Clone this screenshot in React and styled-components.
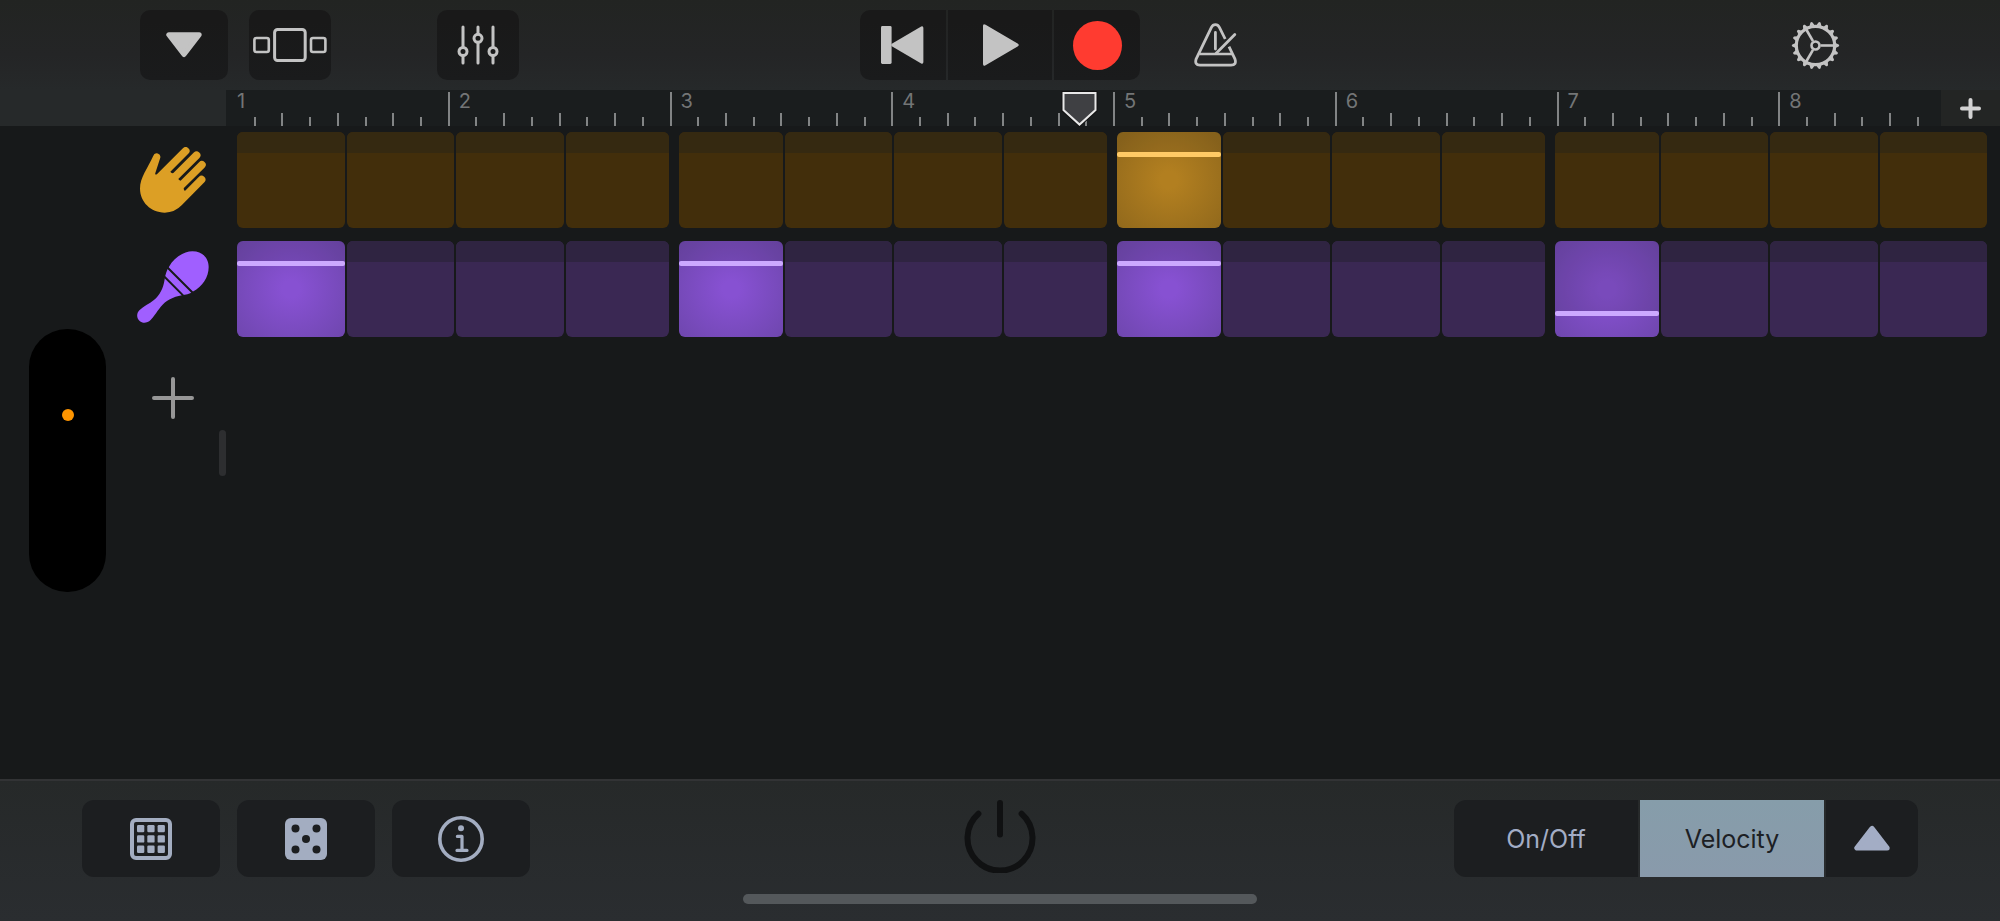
import React, { useState } from "react";
import styled, { createGlobalStyle, css } from "styled-components";

const SURFACE = "#17191a";

const GlobalStyle = createGlobalStyle`
  *, *::before, *::after { box-sizing: border-box; }
  html, body { margin: 0; background: ${SURFACE}; }
  body { font-family: Inter, "Liberation Sans", sans-serif; }
  button { font: inherit; border: 0; margin: 0; padding: 0; background: none; cursor: pointer; }
  svg { display: block; flex: none; }
`;

const Page = styled.div`
  position: relative;
  min-height: 100vh;
  display: flex;
  flex-direction: column;
  background: ${SURFACE};
`;

/* ---------- top toolbar ---------- */

const Toolbar = styled.header`
  display: grid;
  grid-template-columns: 1fr auto 1fr;
  align-items: center;
  padding: 10px 0;
  background: linear-gradient(#222422, #242526 60%, #26292a);
  color: #c3c3c3;
`;

const ToolbarStart = styled.div`
  display: flex;
  gap: 21px;
  padding-left: 140px;
`;

const ToolbarEnd = styled.div`
  display: flex;
  align-items: center;
  justify-content: space-between;
  padding: 0 160px 0 54px;
`;

const ToolButton = styled.button`
  display: flex;
  align-items: center;
  justify-content: center;
  width: ${(p) => (p.$wide ? 88 : 82)}px;
  height: 70px;
  margin-left: ${(p) => (p.$apart ? 85 : 0)}px;
  border-radius: 10px;
  background: linear-gradient(#191919 15%, #1a1b1c);
  color: inherit;
`;

const IconButton = styled.button`
  display: flex;
  color: inherit;
`;

const Transport = styled.div`
  display: flex;
  gap: 2px;
  border-radius: 10px;
  overflow: hidden;
`;

const TransportButton = styled.button`
  display: flex;
  align-items: center;
  justify-content: center;
  width: ${(p) => (p.$main ? 104 : 86)}px;
  height: 70px;
  background: linear-gradient(#191919 15%, #1a1b1c);
  color: inherit;
`;

const RecordDot = styled.span`
  width: 49px;
  height: 49px;
  border-radius: 50%;
  background: #ff3b30;
`;

/* ---------- ruler ---------- */

const RulerRow = styled.div`
  display: grid;
  grid-template-columns: 226px 1fr;
  height: 36px;
  background: #26292a;
`;

const Ruler = styled.div`
  position: relative;
  display: grid;
  grid-template-columns: repeat(8, 1fr);
  background: #1a1d1e;
`;

const Bar = styled.div`
  display: grid;
  color: #737576;
`;

const BarNumber = styled.span`
  grid-area: 1 / 1;
  padding-left: 11px;
  font-size: 20px;
  line-height: 23px;
`;

const Ticks = styled.div`
  grid-area: 1 / 1;
  display: grid;
  grid-template-columns: repeat(8, 1fr);
  align-items: end;
`;

const Tick = styled.span`
  width: 2px;
  height: ${(p) => p.$height}px;
  background: #828485;
`;

const Playhead = styled.svg`
  position: absolute;
  top: 1px;
  left: 48.1%;
  margin-left: -18px;
`;

const AddBars = styled.button`
  position: absolute;
  top: 0;
  right: 0;
  bottom: 0;
  width: 59px;
  display: flex;
  align-items: center;
  justify-content: center;
  background: #232524;
  color: #d2d2d2;
`;

/* ---------- sequencer ---------- */

const Sequencer = styled.main`
  flex: 1;
  display: grid;
  grid-template-columns: 226px 1fr;
`;

const Sidebar = styled.aside`
  display: flex;
  align-items: center;
`;

const TrackList = styled.div`
  align-self: stretch;
  flex: 1;
  display: flex;
  flex-direction: column;
  gap: 13px;
  padding: 6px 0 0 126px;
`;

const TrackButton = styled.button`
  display: flex;
  align-items: center;
  justify-content: center;
  height: 96px;
  color: #979797;
`;

const DragHandle = styled.span`
  width: 7px;
  height: 46px;
  border-radius: 4px;
  background: #2d2e30;
`;

const Lanes = styled.div`
  display: flex;
  flex-direction: column;
  gap: 13px;
  padding: 6px 13px 0 11px;
`;

const Lane = styled.div`
  display: grid;
  grid-template-columns: repeat(16, 1fr);
  gap: 2px;
`;

const tones = {
  gold: { off: "#422e0b", offTop: "#352911", mid: "#b27f20", edge: "#936a1c", line: "#ffca66" },
  violet: { off: "#3a2853", offTop: "#2f2441", mid: "#8751d2", edge: "#7047b0", line: "#cca9ff" },
};

const Step = styled.button`
  display: flex;
  flex-direction: column;
  height: 96px;
  border-radius: 6px;
  overflow: hidden;
  ${(p) => p.$beatEnd && "margin-right: 4px;"}
  ${(p) => p.$beatStart && "margin-left: 4px;"}
  ${(p) =>
    p.$on
      ? css`background: radial-gradient(circle at 50% 50%, ${tones[p.$tone].mid} 12%, ${tones[p.$tone].edge} 95%);`
      : css`background: ${tones[p.$tone].off};`}
`;

const StepTop = styled.span`
  width: 100%;
  height: ${(p) => (p.$low ? 71 : 21)}px;
  background: ${(p) => (p.$on ? "rgba(24, 25, 27, 0.12)" : tones[p.$tone].offTop)};
`;

const StepLevel = styled.span`
  width: 100%;
  height: 5px;
  margin-top: -1px;
  border-radius: 2px;
  background: ${(p) => tones[p.$tone].line};
`;

/* ---------- camera cut-out ---------- */

const CameraIsland = styled.div`
  position: absolute;
  top: 50%;
  left: 29px;
  width: 77px;
  height: 263px;
  margin-top: -132px;
  padding-top: 80px;
  border-radius: 38px;
  background: #000;
`;

const MicDot = styled.span`
  display: block;
  width: 12px;
  height: 12px;
  margin: 0 auto;
  border-radius: 50%;
  background: #ff9500;
`;

/* ---------- bottom bar ---------- */

const BottomBar = styled.footer`
  display: flex;
  flex-direction: column;
  gap: 17px;
  padding: 19px 0 17px;
  border-top: 2px solid #323335;
  background: linear-gradient(#262929, #2a2d30);
`;

const Controls = styled.div`
  display: grid;
  grid-template-columns: 1fr auto 1fr;
  align-items: center;
`;

const ControlsStart = styled.div`
  display: flex;
  gap: 17px;
  padding-left: 82px;
`;

const ControlsEnd = styled.div`
  display: flex;
  justify-content: flex-end;
  padding-right: 82px;
`;

const PadButton = styled.button`
  display: flex;
  align-items: center;
  justify-content: center;
  width: 138px;
  height: 77px;
  border-radius: 12px;
  background: #1c1e20;
  color: #a3adc1;
`;

const PowerButton = styled.button`
  display: flex;
  padding-bottom: 4px;
  color: #101112;
`;

const Segmented = styled.div`
  display: flex;
  gap: 2px;
  border-radius: 12px;
  overflow: hidden;
`;

const Segment = styled.button`
  display: flex;
  align-items: center;
  justify-content: center;
  width: ${(p) => (p.$narrow ? 92 : 184)}px;
  height: 77px;
  font-size: 25px;
  line-height: 30px;
  background: ${(p) => (p.$active ? "linear-gradient(#869daa, #899aab)" : "#1c1e20")};
  color: ${(p) => (p.$active ? "#1c2024" : "#a3adc5")};
`;

const HomeIndicator = styled.div`
  align-self: center;
  width: 514px;
  height: 10px;
  border-radius: 5px;
  background: #54585b;
`;

/* ---------- icons ---------- */

const DownIcon = () => (
  <svg width="36" height="26" viewBox="0 0 36 26" fill="currentColor" stroke="currentColor" strokeWidth="5" strokeLinejoin="round">
    <path d="M2.8 2.8H33.2L18 22.6Z" />
  </svg>
);

const BrowserIcon = () => (
  <svg width="74" height="36" viewBox="0 0 74 36" fill="none" stroke="currentColor">
    <rect x="21.6" y="2.5" width="30.6" height="31" rx="3" strokeWidth="3" />
    <rect x="1.4" y="11" width="14.4" height="14" rx="2" strokeWidth="2.6" />
    <rect x="58" y="11" width="14.4" height="14" rx="2" strokeWidth="2.6" />
  </svg>
);

const MixerIcon = () => (
  <svg width="42" height="40" viewBox="0 0 42 40" fill="none" stroke="currentColor" strokeWidth="3" strokeLinecap="round">
    <path d="M6 2V22M6 31V38M21 2V9M21 18V38M36 2V22M36 31V38" />
    <circle cx="6" cy="26.5" r="4" />
    <circle cx="21" cy="13.3" r="4" />
    <circle cx="36" cy="26.5" r="4" />
  </svg>
);

const RewindIcon = () => (
  <svg width="45" height="38" viewBox="0 0 45 38" fill="currentColor">
    <rect x="0" y="0" width="10.6" height="38" rx="1.4" />
    <path d="M10.8 20.2Q9.6 19 10.8 17.8L40.2 .4Q42.4-.4 42.4 2V36Q42.4 38.4 40.2 37.6Z" />
  </svg>
);

const PlayIcon = () => (
  <svg width="38" height="42" viewBox="-2 0 38 42" fill="currentColor">
    <path d="M0 2Q0-.8 2.6 .8L34.6 19.4Q37 21 34.6 22.6L2.6 41.2Q0 42.8 0 40Z" />
  </svg>
);

const MetronomeIcon = () => (
  <svg width="44" height="44" viewBox="0 0 44 44" fill="none" stroke="currentColor" strokeWidth="2.8">
    <path
      d="M31.2 16 25.4 4.3Q24 1.7 21.4 1.7 18.8 1.7 17.4 4.3L2.2 35.8Q.2 42 6 42.2H37Q42.8 42 41 36.2L35 23.6"
      strokeLinejoin="round"
    />
    <path d="M5.5 31H38" strokeWidth="2.4" />
    <path d="M21.4 9.5V26" strokeLinecap="round" />
    <path d="M22 30.5 40.8 11.4" strokeLinecap="round" />
  </svg>
);

const TEETH = Array.from({ length: 18 }, (_, i) => i * 20);

const GearIcon = () => (
  <svg width="49" height="49" viewBox="-24.5 -24.5 49 49" fill="none" stroke="currentColor">
    <circle r="19.2" strokeWidth="3.2" />
    <circle r="4" strokeWidth="2.6" />
    {[0, 120, 240].map((a) => (
      <path key={a} d="M5 0H18.5" strokeWidth="2.6" transform={`rotate(${a})`} />
    ))}
    {TEETH.map((a) => (
      <path
        key={a}
        d="M20-2.6 23.2-1.1Q24.3 0 23.2 1.1L20 2.6Z"
        fill="currentColor"
        stroke="none"
        transform={`rotate(${a})`}
      />
    ))}
  </svg>
);

const PlusIcon = ({ size, weight }) => (
  <svg width={size} height={size} viewBox={`0 0 ${size} ${size}`} stroke="currentColor" strokeWidth={weight} strokeLinecap="round">
    <path d={`M${weight / 2} ${size / 2}H${size - weight / 2}M${size / 2} ${weight / 2}V${size - weight / 2}`} />
  </svg>
);

const HandIcon = () => (
  <svg width="66" height="66" viewBox="57 80 200 200" fill="#dc9f25">
    <path d="M109 162 187 84A11.6 11.6 0 0 1 204 100L149 155Q151 160 158 159L220 97A11.6 11.6 0 0 1 237 113L173 177Q175 181 180 182L236 126A11.6 11.6 0 0 1 253 142L190 204Q188 209 193 213L235 171A11.6 11.6 0 0 1 252 187L184 256Q162 279 132 279C90 279 57 247 57 206 57 172 80 145 97 107A11 11 0 0 1 118 114L103 160Q103 166 109 162Z" />
  </svg>
);

const MaracaIcon = () => (
  <svg width="72" height="76" viewBox="53 393 217 229" fill="#a05fff">
    <path d="M149 441C165 412 195 394 220 394 250 394 269 414 269 441 269 472 250 500 222 515 210 523 200 525 188 526 162 531 140 541 124 562 110 580 104 592 94 601 84 611 70 612 61 604 51 594 51 580 61 571 72 561 90 552 104 541 122 525 132 505 136 480 138 465 142 452 149 441Z" />
    <path d="M138 436 227 525M126 461 200 535" stroke={SURFACE} strokeWidth="6" />
  </svg>
);

const GridIcon = () => (
  <svg width="42" height="42" viewBox="0 0 42 42" fill="currentColor">
    <rect x="2" y="2" width="38" height="38" rx="4" fill="none" stroke="currentColor" strokeWidth="4" />
    {[7, 17.3, 27.6].map((y) => [7, 17.3, 27.6].map((x) => <rect key={`${x}-${y}`} x={x} y={y} width="7.3" height="7.3" rx="1.2" />))}
  </svg>
);

const DiceIcon = () => (
  <svg width="42" height="42" viewBox="0 0 42 42" fill="currentColor">
    <rect width="42" height="42" rx="6" />
    {[[10.5, 10.5], [31.5, 10.5], [21, 21], [10.5, 31.5], [31.5, 31.5]].map(([x, y]) => (
      <circle key={`${x}-${y}`} cx={x} cy={y} r="4" fill="#1c1e20" />
    ))}
  </svg>
);

const InfoIcon = () => (
  <svg width="46" height="46" viewBox="0 0 46 46" fill="none" stroke="currentColor">
    <circle cx="23" cy="23" r="21.2" strokeWidth="3.6" />
    <circle cx="23" cy="12.3" r="3" fill="currentColor" stroke="none" />
    <path d="M19.4 20.4H24V34.4M19 34.4H29" strokeWidth="3.2" strokeLinecap="round" strokeLinejoin="round" />
  </svg>
);

const PowerIcon = () => (
  <svg width="72" height="73" viewBox="0 0 72 73" fill="none" stroke="currentColor" strokeWidth="6" strokeLinecap="round">
    <path d="M14.4 13.8A32.5 32.5 0 1 0 57.6 13.8" />
    <path d="M36 3V34.5" />
  </svg>
);

const UpIcon = () => (
  <svg width="36" height="28" viewBox="0 0 36 28" fill="currentColor" stroke="currentColor" strokeWidth="5" strokeLinejoin="round">
    <path d="M2.8 23H33.2L18 3.4Z" />
  </svg>
);

/* ---------- data ---------- */

const TICK_HEIGHTS = [34, 9, 13, 9, 13, 9, 13, 9];
const STEPS = Array.from({ length: 16 }, (_, i) => i);
const TRACKS = [
  { name: "Claps", tone: "gold", Icon: HandIcon, hits: { 8: "high" } },
  { name: "Shaker", tone: "violet", Icon: MaracaIcon, hits: { 0: "high", 4: "high", 8: "high", 12: "low" } },
];

export default function App() {
  const [mode, setMode] = useState("Velocity");

  return (
    <Page>
      <GlobalStyle />
      <Toolbar>
        <ToolbarStart>
          <ToolButton $wide aria-label="Navigation"><DownIcon /></ToolButton>
          <ToolButton aria-label="Browser"><BrowserIcon /></ToolButton>
          <ToolButton $apart aria-label="Track controls"><MixerIcon /></ToolButton>
        </ToolbarStart>
        <Transport>
          <TransportButton aria-label="Go to beginning"><RewindIcon /></TransportButton>
          <TransportButton $main aria-label="Play"><PlayIcon /></TransportButton>
          <TransportButton aria-label="Record"><RecordDot /></TransportButton>
        </Transport>
        <ToolbarEnd>
          <IconButton aria-label="Metronome"><MetronomeIcon /></IconButton>
          <IconButton aria-label="Settings"><GearIcon /></IconButton>
        </ToolbarEnd>
      </Toolbar>

      <RulerRow>
        <span />
        <Ruler>
          {[1, 2, 3, 4, 5, 6, 7, 8].map((bar) => (
            <Bar key={bar}>
              <Ticks>
                {TICK_HEIGHTS.map((h, i) => (
                  <Tick key={i} $height={bar === 1 && i === 0 ? 0 : h} />
                ))}
              </Ticks>
              <BarNumber>{bar}</BarNumber>
            </Bar>
          ))}
          <Playhead width="37" height="36" viewBox="0 0 37 36">
            <path d="M2.5 2H34.5V19L18.5 33.6 2.5 19Z" fill="#3f4043" stroke="#111" strokeWidth="4" />
            <path d="M2.5 2H34.5V19L18.5 33.6 2.5 19Z" fill="#3f4043" stroke="#e8e8e8" strokeWidth="2" />
          </Playhead>
          <AddBars aria-label="Add bars"><PlusIcon size={21} weight={4} /></AddBars>
        </Ruler>
      </RulerRow>

      <Sequencer>
        <Sidebar>
          <TrackList>
            {TRACKS.map(({ name, Icon }) => (
              <TrackButton key={name} aria-label={name}><Icon /></TrackButton>
            ))}
            <TrackButton aria-label="Add row"><PlusIcon size={42} weight={4} /></TrackButton>
          </TrackList>
          <DragHandle />
        </Sidebar>
        <Lanes>
          {TRACKS.map(({ name, tone, hits }) => (
            <Lane key={name}>
              {STEPS.map((i) => {
                const hit = hits[i];
                return (
                  <Step
                    key={i}
                    $tone={tone}
                    $on={!!hit}
                    $beatStart={i > 0 && i % 4 === 0}
                    $beatEnd={i < 15 && i % 4 === 3}
                    aria-label={`${name} step ${i + 1}`}
                    aria-pressed={!!hit}
                  >
                    <StepTop $tone={tone} $on={!!hit} $low={hit === "low"} />
                    {hit && <StepLevel $tone={tone} />}
                  </Step>
                );
              })}
            </Lane>
          ))}
        </Lanes>
      </Sequencer>

      <CameraIsland><MicDot /></CameraIsland>

      <BottomBar>
        <Controls>
          <ControlsStart>
            <PadButton aria-label="Patterns"><GridIcon /></PadButton>
            <PadButton aria-label="Randomize"><DiceIcon /></PadButton>
            <PadButton aria-label="Info"><InfoIcon /></PadButton>
          </ControlsStart>
          <PowerButton aria-label="Power"><PowerIcon /></PowerButton>
          <ControlsEnd>
            <Segmented>
              {["On/Off", "Velocity"].map((label) => (
                <Segment key={label} $active={mode === label} aria-pressed={mode === label} onClick={() => setMode(label)}>
                  {label}
                </Segment>
              ))}
              <Segment $narrow aria-label="More modes"><UpIcon /></Segment>
            </Segmented>
          </ControlsEnd>
        </Controls>
        <HomeIndicator />
      </BottomBar>
    </Page>
  );
}
